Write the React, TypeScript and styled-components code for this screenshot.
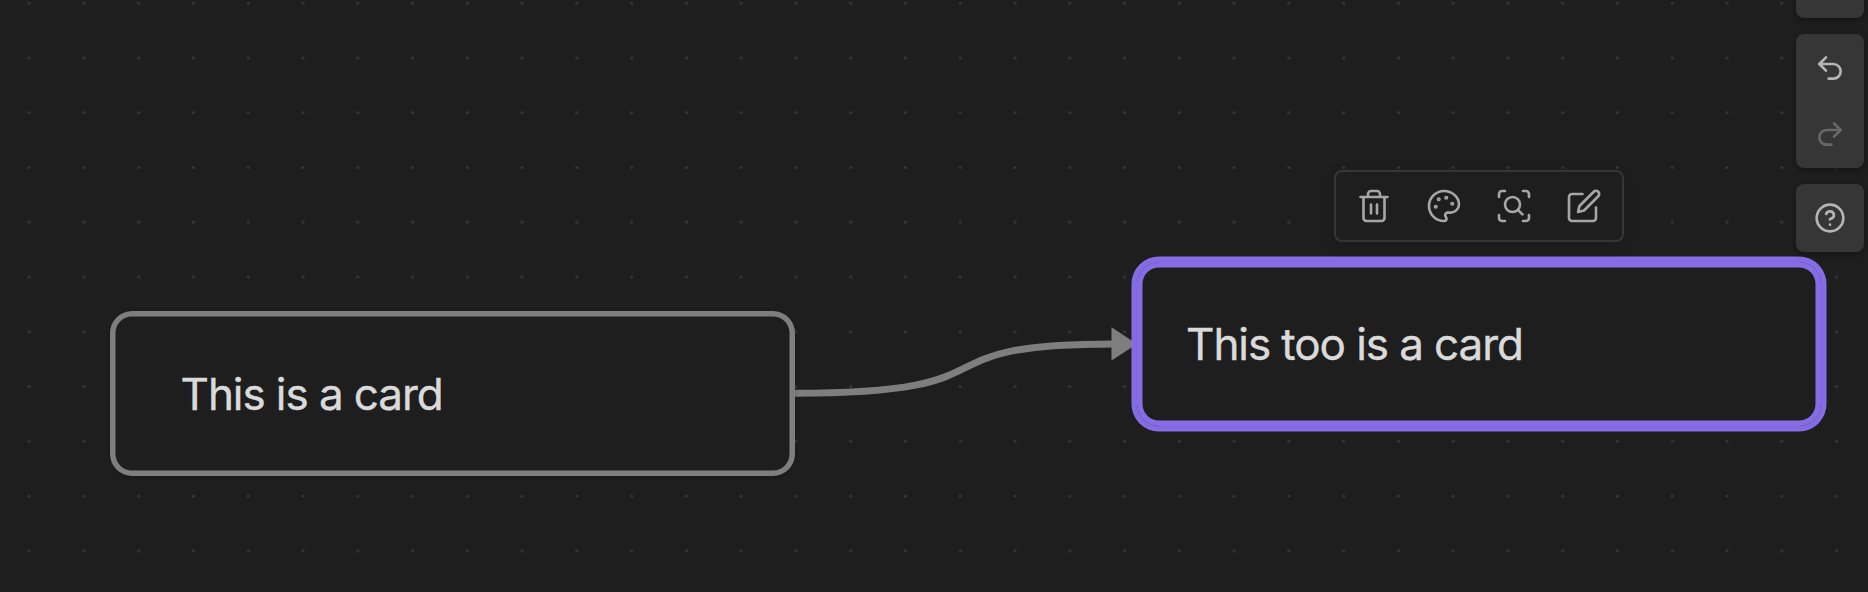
import React from 'react';
import styled, { createGlobalStyle } from 'styled-components';

const GlobalStyle = createGlobalStyle`
  *, *::before, *::after { box-sizing: border-box; }
  body { margin: 0; background: #1e1e1e; overflow: hidden; }
`;

const Canvas = styled.main`
  position: relative;
  width: 1868px;
  height: 592px;
  overflow: hidden;
  background: #1e1e1e;
  font-family: Inter, "Liberation Sans", sans-serif;
`;

const CanvasLayer = styled.svg`
  position: absolute;
  inset: 0;
  width: 100%;
  height: 100%;
`;

const Card = styled.article<{ $x: number; $y: number; $pad: number; $selected?: boolean }>`
  position: absolute;
  left: ${p => p.$x}px;
  top: ${p => p.$y}px;
  width: 684.6px;
  height: 164.6px;
  display: flex;
  align-items: center;
  padding-left: ${p => p.$pad}px;
  background: ${p => (p.$selected ? '#866de6' : '#1e1e1e')};
  background: ${p => (p.$selected ? 'linear-gradient(#1e1e1e, #1e1e1e) padding-box, #866de6' : '#1e1e1e')};
  border-radius: 22px;
  box-shadow: ${p =>
    p.$selected
      ? 'inset 0 0 0 5.5px #866de6, 0 1px 4px rgba(0, 0, 0, 0.09), 0 0 0 5.5px #866de6'
      : 'inset 0 0 0 5.5px #7e7e7e, 0 1px 4px rgba(0, 0, 0, 0.2)'};
`;

const CardText = styled.p`
  margin: 0;
  padding-top: 1px;
  color: #dadada;
  font-size: 44px;
  line-height: 64px;
  letter-spacing: -1.08px;
  -webkit-text-stroke: 0.4px #dadada;
  white-space: nowrap;
`;

const CardMenu = styled.div`
  position: absolute;
  left: 1334px;
  top: 170px;
  width: 290px;
  height: 72px;
  display: flex;
  align-items: center;
  justify-content: center;
  gap: 34px;
  background: #1e1e1e;
  border: 2px solid #363636;
  border-radius: 8px;
  box-shadow: 0 4px 14px rgba(0, 0, 0, 0.12);
  color: #a6a6a6;
`;

const Controls = styled.aside`
  position: absolute;
  right: 4px;
  top: -50px;
  display: flex;
  flex-direction: column;
  gap: 16px;
`;

const ControlGroup = styled.div<{ $stacked?: boolean }>`
  width: 68px;
  padding-bottom: ${p => (p.$stacked ? 2 : 0)}px;
  background: #363636;
  border-radius: 8px;
  box-shadow: 0 2px 6px rgba(0, 0, 0, 0.35);
`;

const ControlButton = styled.button<{ $disabled?: boolean; $height: number }>`
  width: 68px;
  height: ${p => p.$height}px;
  display: flex;
  align-items: center;
  justify-content: center;
  padding: 0;
  border: 0;
  background: transparent;
  color: ${p => (p.$disabled ? '#686868' : '#b5b5b5')};
`;

const Glyph = styled.svg<{ $size: number; $weight: number }>`
  width: ${p => p.$size}px;
  height: ${p => p.$size}px;
  flex: none;
  fill: none;
  stroke: currentColor;
  stroke-width: ${p => p.$weight};
  stroke-linecap: round;
  stroke-linejoin: round;
`;

function Icon({ size = 36, weight = 1.75, children }: { size?: number; weight?: number; children: React.ReactNode }) {
  return <Glyph $size={size} $weight={weight} viewBox="0 0 24 24">{children}</Glyph>;
}

export default function App() {
  return (
    <>
      <GlobalStyle />
      <Canvas>
        <CanvasLayer>
          <defs>
            <pattern id="grid" x="1.75" y="-24.25" width="54.77" height="54.77" patternUnits="userSpaceOnUse">
              <circle cx="27.385" cy="27.385" r="1.6" fill="#363636" />
            </pattern>
          </defs>
          <rect width="100%" height="100%" fill="url(#grid)" />
          <path d="M794 393.3C1027 393.3 907 343.9 1113 343.9" fill="none" stroke="#7e7e7e" strokeWidth="7" />
          <path d="M1111.5 327.3V360.5L1137 343.9Z" fill="#7e7e7e" />
        </CanvasLayer>
        <Card $x={110.1} $y={311.1} $pad={70.5}>
          <CardText>This is a card</CardText>
        </Card>
        <Card $x={1136.9} $y={261.5} $pad={49.2} $selected>
          <CardText>This too is a card</CardText>
        </Card>
        <CardMenu>
          <Icon>
            <path d="M3 6h18M19 6v14a2 2 0 0 1-2 2H7a2 2 0 0 1-2-2V6M8 6V4a2 2 0 0 1 2-2h4a2 2 0 0 1 2 2v2M10 11v6M14 11v6" />
          </Icon>
          <Icon>
            <circle cx="13.5" cy="6.5" r=".5" fill="currentColor" />
            <circle cx="17.5" cy="10.5" r=".5" fill="currentColor" />
            <circle cx="8.5" cy="7.5" r=".5" fill="currentColor" />
            <circle cx="6.5" cy="12.5" r=".5" fill="currentColor" />
            <path d="M12 2C6.5 2 2 6.5 2 12s4.5 10 10 10c.926 0 1.648-.746 1.648-1.688 0-.437-.18-.835-.437-1.125-.29-.289-.438-.652-.438-1.125a1.64 1.64 0 0 1 1.668-1.668h1.996c3.051 0 5.555-2.503 5.555-5.554C21.965 6.012 17.461 2 12 2z" />
          </Icon>
          <Icon>
            <path d="M2 6V4a2 2 0 0 1 2-2h2M18 2h2a2 2 0 0 1 2 2v2M22 18v2a2 2 0 0 1-2 2h-2M6 22H4a2 2 0 0 1-2-2v-2M14.6 14.6l3 3" />
            <circle cx="11" cy="11" r="5" />
          </Icon>
          <Icon>
            <path d="M11 4H4a2 2 0 0 0-2 2v14a2 2 0 0 0 2 2h14a2 2 0 0 0 2-2v-7" />
            <path d="M18.5 2.5a2.12 2.12 0 0 1 3 3L12 15l-4 1 1-4Z" />
          </Icon>
        </CardMenu>
        <Controls>
          <ControlGroup>
            <ControlButton $height={68} />
          </ControlGroup>
          <ControlGroup $stacked>
            <ControlButton $height={68}>
              <Icon size={32} weight={2}>
                <path d="M9 14 4 9l5-5" />
                <path d="M4 9h10.5a5.5 5.5 0 0 1 0 11H11" />
              </Icon>
            </ControlButton>
            <ControlButton $height={64} $disabled>
              <Icon size={32} weight={2}>
                <path d="m15 14 5-5-5-5" />
                <path d="M20 9H9.5a5.5 5.5 0 0 0 0 11H13" />
              </Icon>
            </ControlButton>
          </ControlGroup>
          <ControlGroup>
            <ControlButton $height={68}>
              <Icon size={32} weight={2}>
                <circle cx="12" cy="12" r="10" />
                <path d="M9.09 9a3 3 0 0 1 5.83 1c0 2-3 3-3 3M12 17h.01" />
              </Icon>
            </ControlButton>
          </ControlGroup>
        </Controls>
      </Canvas>
    </>
  );
}
